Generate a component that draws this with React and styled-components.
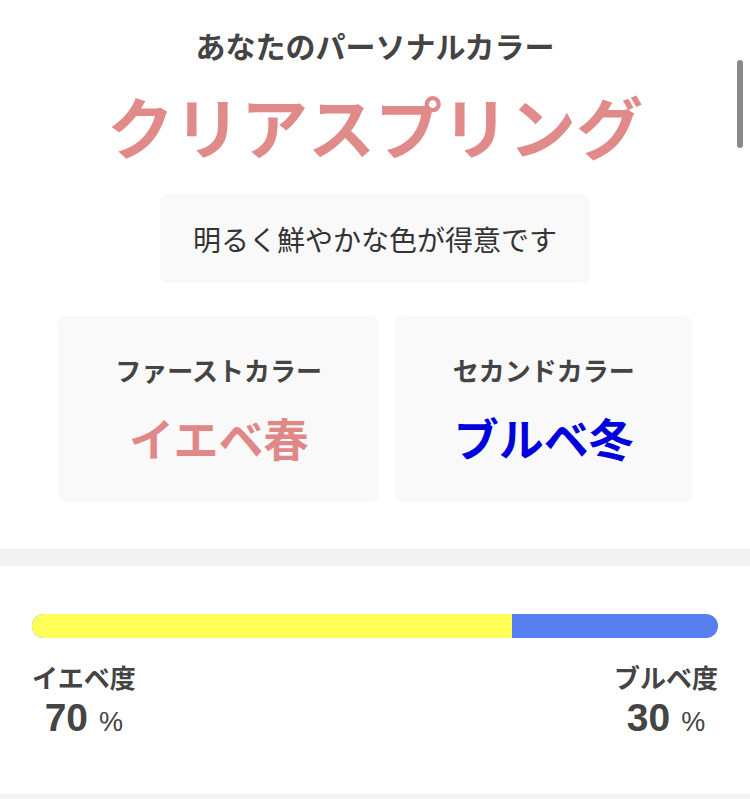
import React from 'react';
import styled, { createGlobalStyle } from 'styled-components';

const GlobalStyle = createGlobalStyle`
  html, body {
    margin: 0;
    padding: 0;
    background: #ffffff;
  }
  body {
    font-family: "Noto Sans CJK JP", "Noto Sans", sans-serif;
    color: #444444;
    overflow: hidden;
  }
  * {
    box-sizing: border-box;
  }
`;

const StyledPage = styled.div`
  width: 750px;
  min-height: 799px;
  display: flex;
  flex-direction: column;
`;

const StyledResultSection = styled.section`
  display: flex;
  flex-direction: column;
  align-items: center;
  padding: 25px 0 47px;
`;

const StyledLead = styled.h2`
  margin: 0;
  font-size: 30px;
  line-height: 40px;
  font-weight: 700;
  color: #444444;
`;

const StyledTypeName = styled.h1`
  margin: 20px 0 0;
  font-size: 67px;
  line-height: 80px;
  font-weight: 700;
  color: #e08a8a;
`;

const StyledDescription = styled.p`
  margin: 29px 0 0;
  padding: 0 33px;
  height: 89px;
  display: flex;
  align-items: center;
  background: #f9f9f9;
  border-radius: 8px;
  font-size: 28px;
  font-weight: 400;
  color: #333333;
`;

const StyledCardRow = styled.div`
  align-self: stretch;
  display: flex;
  gap: 16px;
  margin-top: 33px;
  padding: 0 58px;
`;

const StyledColorCard = styled.div`
  flex: 1 1 auto;
  display: flex;
  flex-direction: column;
  align-items: center;
  height: 186px;
  padding: 36px 20px 0;
  background: #f9f9f9;
  border-radius: 8px;
`;

const StyledCardLabel = styled.div`
  font-size: 26px;
  line-height: 36px;
  font-weight: 700;
  color: #444444;
  white-space: nowrap;
`;

const StyledCardValue = styled.div`
  margin-top: 22px;
  font-size: 45px;
  line-height: 56px;
  font-weight: 700;
  color: ${({ tone }) => tone};
  white-space: nowrap;
`;

const StyledDivider = styled.div`
  height: 17px;
  background: #f3f3f3;
`;

const StyledRatioSection = styled.section`
  padding: 48px 32px 0;
  height: 228px;
`;

const StyledBar = styled.div`
  display: flex;
  height: 24px;
  border-radius: 12px;
  overflow: hidden;
  background: #577ff0;
`;

const StyledBarFill = styled.div`
  height: 100%;
  background: #ffff58;
`;

const StyledRatioRow = styled.div`
  display: flex;
  justify-content: space-between;
  margin-top: 23px;
`;

const StyledRatioItem = styled.div`
  display: flex;
  flex-direction: column;
  align-items: center;
`;

const StyledRatioLabel = styled.div`
  font-size: 26px;
  line-height: 32px;
  font-weight: 700;
  color: #444444;
`;

const StyledRatioValue = styled.div`
  display: flex;
  align-items: baseline;
  gap: 11px;
  margin-top: 2px;
  font-family: "Liberation Sans", Arial, sans-serif;
  color: #444444;
`;

const StyledNumber = styled.span`
  font-size: 39px;
  line-height: 46px;
  font-weight: 700;
`;

const StyledUnit = styled.span`
  font-size: 27px;
  font-weight: 400;
`;

const StyledScrollThumb = styled.div`
  position: fixed;
  top: 60px;
  right: 7px;
  width: 6px;
  height: 88px;
  border-radius: 3px;
  background: #8a8a8a;
`;

const yellowRatio = 70;

const App = () => (
  <>
    <GlobalStyle />
    <StyledPage>
      <StyledResultSection>
        <StyledLead>あなたのパーソナルカラー</StyledLead>
        <StyledTypeName>クリアスプリング</StyledTypeName>
        <StyledDescription>明るく鮮やかな色が得意です</StyledDescription>
        <StyledCardRow>
          <StyledColorCard>
            <StyledCardLabel>ファーストカラー</StyledCardLabel>
            <StyledCardValue tone="#e08888">イエベ春</StyledCardValue>
          </StyledColorCard>
          <StyledColorCard>
            <StyledCardLabel>セカンドカラー</StyledCardLabel>
            <StyledCardValue tone="#0000dd">ブルベ冬</StyledCardValue>
          </StyledColorCard>
        </StyledCardRow>
      </StyledResultSection>
      <StyledDivider />
      <StyledRatioSection>
        <StyledBar>
          <StyledBarFill style={{ width: `${yellowRatio}%` }} />
        </StyledBar>
        <StyledRatioRow>
          <StyledRatioItem>
            <StyledRatioLabel>イエベ度</StyledRatioLabel>
            <StyledRatioValue>
              <StyledNumber>{yellowRatio}</StyledNumber>
              <StyledUnit>%</StyledUnit>
            </StyledRatioValue>
          </StyledRatioItem>
          <StyledRatioItem>
            <StyledRatioLabel>ブルベ度</StyledRatioLabel>
            <StyledRatioValue>
              <StyledNumber>{100 - yellowRatio}</StyledNumber>
              <StyledUnit>%</StyledUnit>
            </StyledRatioValue>
          </StyledRatioItem>
        </StyledRatioRow>
      </StyledRatioSection>
      <StyledDivider />
    </StyledPage>
    <StyledScrollThumb />
  </>
);

export default App;
